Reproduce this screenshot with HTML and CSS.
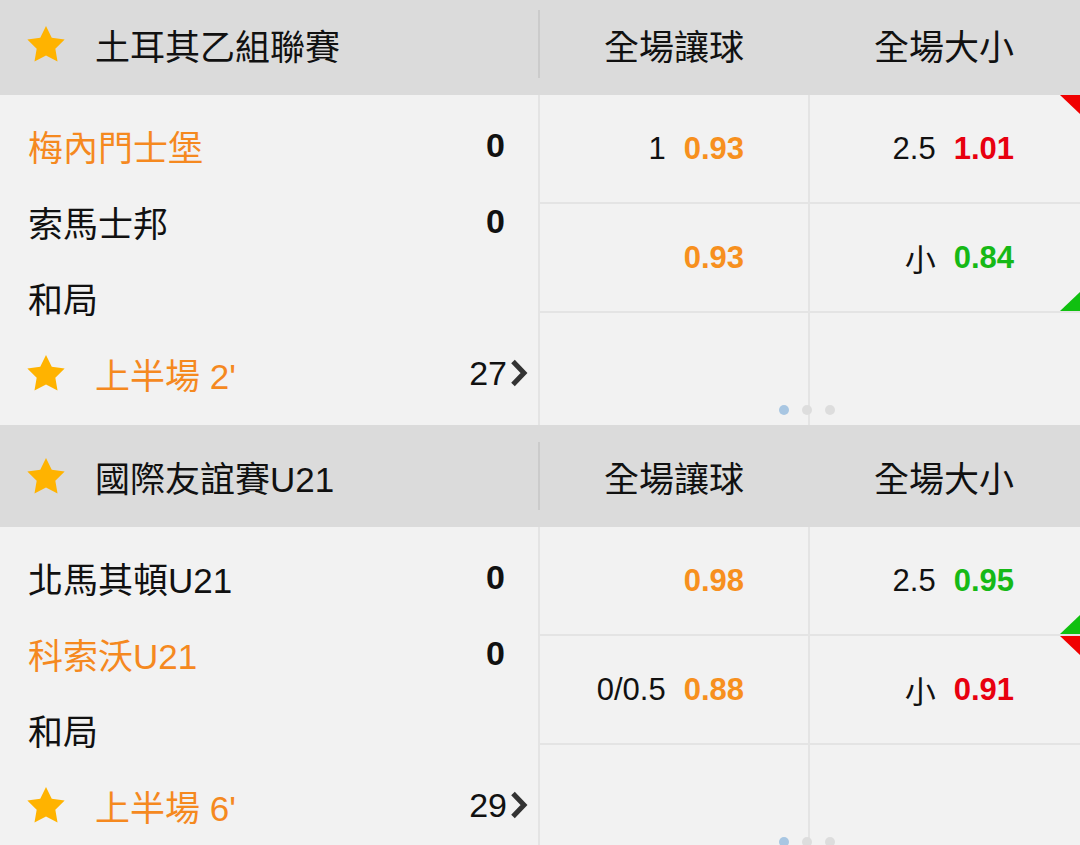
FILE: index.html
```html
<!DOCTYPE html>
<html lang="zh-Hant">
<head>
    <meta charset="UTF-8">
    <meta name="viewport" content="width=device-width, initial-scale=1.0">
    <title>滾球</title>
    <link rel="stylesheet" href="styles.css">
</head>
<body>
    <div class="match-list">
        <div class="match">
            <div class="league-bar">
                <div class="league-name">
                    <svg class="star" viewBox="2 2 20 19.3"><path d="M12 2l3.09 6.26L22 9.27l-5 4.87 1.18 6.88L12 17.770l-6.18 3.25L7 14.14 2 9.27l6.91-1.01L12 2z"/></svg>
                    <span>土耳其乙組聯賽</span>
                </div>
                <div class="market-title">全場讓球</div>
                <div class="market-title">全場大小</div>
            </div>
            <div class="match-body">
                <div class="teams">
                    <div class="team-row"><span class="team-name hot">梅內門士堡</span><span class="score">0</span></div>
                    <div class="team-row"><span class="team-name">索馬士邦</span><span class="score">0</span></div>
                    <div class="team-row"><span class="team-name">和局</span></div>
                    <div class="status-row">
                        <svg class="star" viewBox="2 2 20 19.3"><path d="M12 2l3.09 6.26L22 9.27l-5 4.87 1.18 6.88L12 17.77l-6.18 3.25L7 14.14 2 9.27l6.91-1.01L12 2z"/></svg>
                        <span class="period">上半場 2'</span>
                        <span class="more">27<svg class="chevron" viewBox="0 0 18 28"><polyline points="3,2.5 14,14 3,25.5"/></svg></span>
                    </div>
                </div>
                <div class="odds">
                    <div class="odds-cell"><span class="line">1</span><span class="price orange">0.93</span></div>
                    <div class="odds-cell col-ou drop"><span class="line">2.5</span><span class="price red">1.01</span></div>
                    <div class="odds-cell"><span class="price orange">0.93</span></div>
                    <div class="odds-cell col-ou rise"><span class="line">小</span><span class="price green">0.84</span></div>
                    <div class="odds-cell last"></div>
                    <div class="odds-cell col-ou last"></div>
                    <div class="pager"><i class="on"></i><i></i><i></i></div>
                </div>
            </div>
        </div>

        <div class="match">
            <div class="league-bar">
                <div class="league-name">
                    <svg class="star" viewBox="2 2 20 19.3"><path d="M12 2l3.09 6.26L22 9.27l-5 4.87 1.18 6.88L12 17.77l-6.18 3.25L7 14.14 2 9.27l6.91-1.01L12 2z"/></svg>
                    <span>國際友誼賽U21</span>
                </div>
                <div class="market-title">全場讓球</div>
                <div class="market-title">全場大小</div>
            </div>
            <div class="match-body">
                <div class="teams">
                    <div class="team-row"><span class="team-name">北馬其頓U21</span><span class="score">0</span></div>
                    <div class="team-row"><span class="team-name hot">科索沃U21</span><span class="score">0</span></div>
                    <div class="team-row"><span class="team-name">和局</span></div>
                    <div class="status-row">
                        <svg class="star" viewBox="2 2 20 19.3"><path d="M12 2l3.09 6.26L22 9.27l-5 4.87 1.18 6.88L12 17.77l-6.18 3.25L7 14.14 2 9.27l6.91-1.01L12 2z"/></svg>
                        <span class="period">上半場 6'</span>
                        <span class="more">29<svg class="chevron" viewBox="0 0 18 28"><polyline points="3,2.5 14,14 3,25.5"/></svg></span>
                    </div>
                </div>
                <div class="odds">
                    <div class="odds-cell"><span class="price orange">0.98</span></div>
                    <div class="odds-cell col-ou rise"><span class="line">2.5</span><span class="price green">0.95</span></div>
                    <div class="odds-cell"><span class="line">0/0.5</span><span class="price orange">0.88</span></div>
                    <div class="odds-cell col-ou drop"><span class="line">小</span><span class="price red">0.91</span></div>
                    <div class="odds-cell last"></div>
                    <div class="odds-cell col-ou last"></div>
                    <div class="pager"><i class="on"></i><i></i><i></i></div>
                </div>
            </div>
        </div>
    </div>
</body>
</html>
```

FILE: styles.css
```css
body {
    margin: 0;
    padding: 0;
    background-color: #f2f2f2;
    font-family: "Liberation Sans", "Noto Sans CJK TC", sans-serif;
    color: #111;
    overflow: hidden;
}
.match-list {
    margin-top: -7px;
}
.league-bar {
    height: 102px;
    background-color: #dbdbdb;
    display: grid;
    grid-template-columns: 540px 268px 1fr;
    align-items: center;
}
.league-name {
    height: 68px;
    border-right: 2px solid #cbcbcb;
    display: flex;
    align-items: center;
    padding-left: 27px;
    font-size: 35px;
}
.star {
    width: 38px;
    height: 36px;
    fill: #ffb300;
    margin-right: 30px;
    flex-shrink: 0;
}
.market-title {
    text-align: center;
    font-size: 35px;
}
.match-body {
    display: grid;
    grid-template-columns: 540px 1fr;
    height: 330px;
}
.teams {
    border-right: 2px solid #e4e4e4;
    padding-top: 12px;
}
.team-row,
.status-row {
    height: 76px;
    display: flex;
    align-items: center;
    font-size: 35px;
}
.team-row {
    justify-content: space-between;
    padding: 0 33px 0 28px;
}
.team-name.hot {
    color: #f5891f;
}
.score {
    font-weight: bold;
    font-size: 34px;
}
.status-row {
    padding: 0 10px 0 27px;
}
.period {
    color: #f5891f;
    flex-grow: 1;
}
.more {
    display: flex;
    align-items: center;
    font-size: 34px;
}
.chevron {
    width: 18px;
    height: 28px;
    margin-left: 3px;
    fill: none;
    stroke: #333;
    stroke-width: 5;
}
.odds {
    position: relative;
    display: grid;
    grid-template-columns: 268px 1fr;
    grid-template-rows: 109px 109px 1fr;
}
.odds-cell {
    position: relative;
    display: flex;
    justify-content: flex-end;
    align-items: center;
    gap: 18px;
    padding-right: 64px;
    border-bottom: 2px solid #e4e4e4;
    font-size: 31px;
}
.odds-cell.col-ou {
    border-left: 2px solid #e4e4e4;
    padding-right: 66px;
}
.odds-cell.last {
    border-bottom: none;
}
.price {
    font-weight: bold;
}
.orange { color: #f7901e; }
.red { color: #e8000f; }
.green { color: #16b916; }
.odds-cell.drop::after {
    content: "";
    position: absolute;
    top: 0;
    right: 0;
    border-top: 19px solid #f00000;
    border-left: 20px solid transparent;
}
.odds-cell.rise::after {
    content: "";
    position: absolute;
    bottom: 0;
    right: 0;
    border-bottom: 19px solid #10c010;
    border-left: 20px solid transparent;
}
.pager {
    position: absolute;
    bottom: 10px;
    left: 239px;
    display: flex;
    gap: 13px;
}
.pager i {
    width: 10px;
    height: 10px;
    border-radius: 50%;
    background-color: #dddddd;
}
.pager i.on {
    background-color: #a8c6e2;
}
```
